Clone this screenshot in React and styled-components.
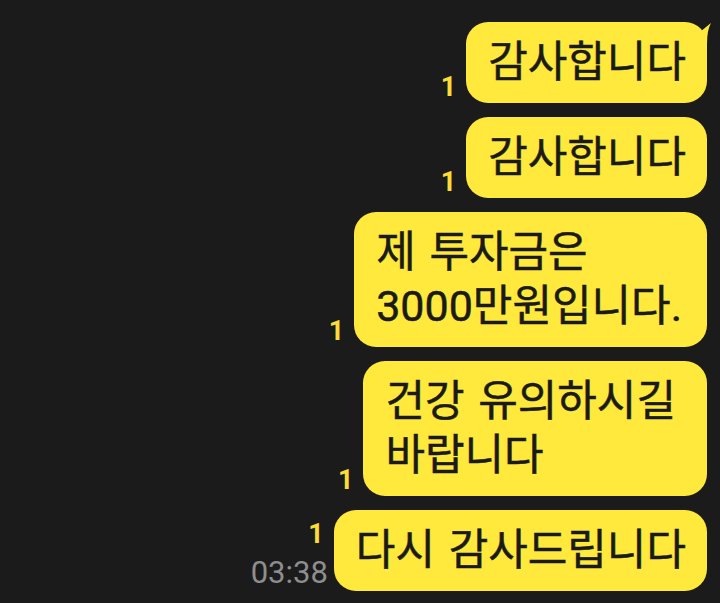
import React from 'react';
import styled, { createGlobalStyle } from 'styled-components';

const GlobalStyle = createGlobalStyle`
    html, body {
        margin: 0;
        padding: 0;
        background: #1b1b1b;
    }
    body {
        font-family: Roboto, "Noto Sans CJK KR", sans-serif;
    }
`;

const Screen = styled.div`
    width: 720px;
    height: 603px;
    overflow: hidden;
    background: #1b1b1b;
    box-sizing: border-box;
    padding: 22px 13px 0 0;

    display: flex;
    flex-direction: column;
    align-items: flex-end;
    gap: 14px;
`;

const Row = styled.div`
    display: flex;
    align-items: flex-end;
    gap: 10px;
`;

const Meta = styled.div`
    display: flex;
    flex-direction: column;
    align-items: flex-end;
    padding-bottom: 1px;
`;

const Unread = styled.span`
    color: #fadd36;
    font-family: Roboto, sans-serif;
    font-weight: bold;
    font-size: 27px;
    line-height: 30px;
`;

const Time = styled.span`
    margin-top: 7px;
    margin-right: -4px;
    color: #8e8e8e;
    font-family: Roboto, sans-serif;
    font-size: 31px;
    line-height: 34px;
`;

const Bubble = styled.div`
    position: relative;
    background: #fee93c;
    color: #1a1a1a;
    border-radius: 22px;
    padding: 13px ${(p) => 21 + (p.$extra || 0)}px 14px 22px;

    font-family: Roboto, "Noto Sans CJK KR", sans-serif;
    font-weight: 400;
    font-size: 43px;
    line-height: 54px;
    word-spacing: 3px;
    white-space: pre-line;
    -webkit-text-stroke: 0.5px #1a1a1a;
`;

const Tail = styled.svg`
    position: absolute;
    top: 0;
    right: -5px;
    width: 17px;
    height: 24px;
`;

const messages = [
    { text: '감사합니다', tail: true },
    { text: '감사합니다' },
    { text: '제 투자금은\n3000만원입니다.', extra: 4 },
    { text: '건강 유의하시길\n바랍니다', extra: 10 },
    { text: '다시 감사드립니다', time: '03:38' },
];

function App() {
    return (
        <>
            <GlobalStyle />
            <Screen>
                {messages.map((m, i) => (
                    <Row key={i}>
                        <Meta>
                            <Unread>1</Unread>
                            {m.time && <Time>{m.time}</Time>}
                        </Meta>
                        <Bubble $extra={m.extra}>
                            {m.tail && (
                                <Tail viewBox="0 0 17 24">
                                    {/* speech tail on the first bubble of the group */}
                                    <path d="M5 10 Q11 5 16 1 Q12 8 12 22 L5 22 Z" fill="#fee93c" />
                                </Tail>
                            )}
                            {m.text}
                        </Bubble>
                    </Row>
                ))}
            </Screen>
        </>
    );
}

export default App;
